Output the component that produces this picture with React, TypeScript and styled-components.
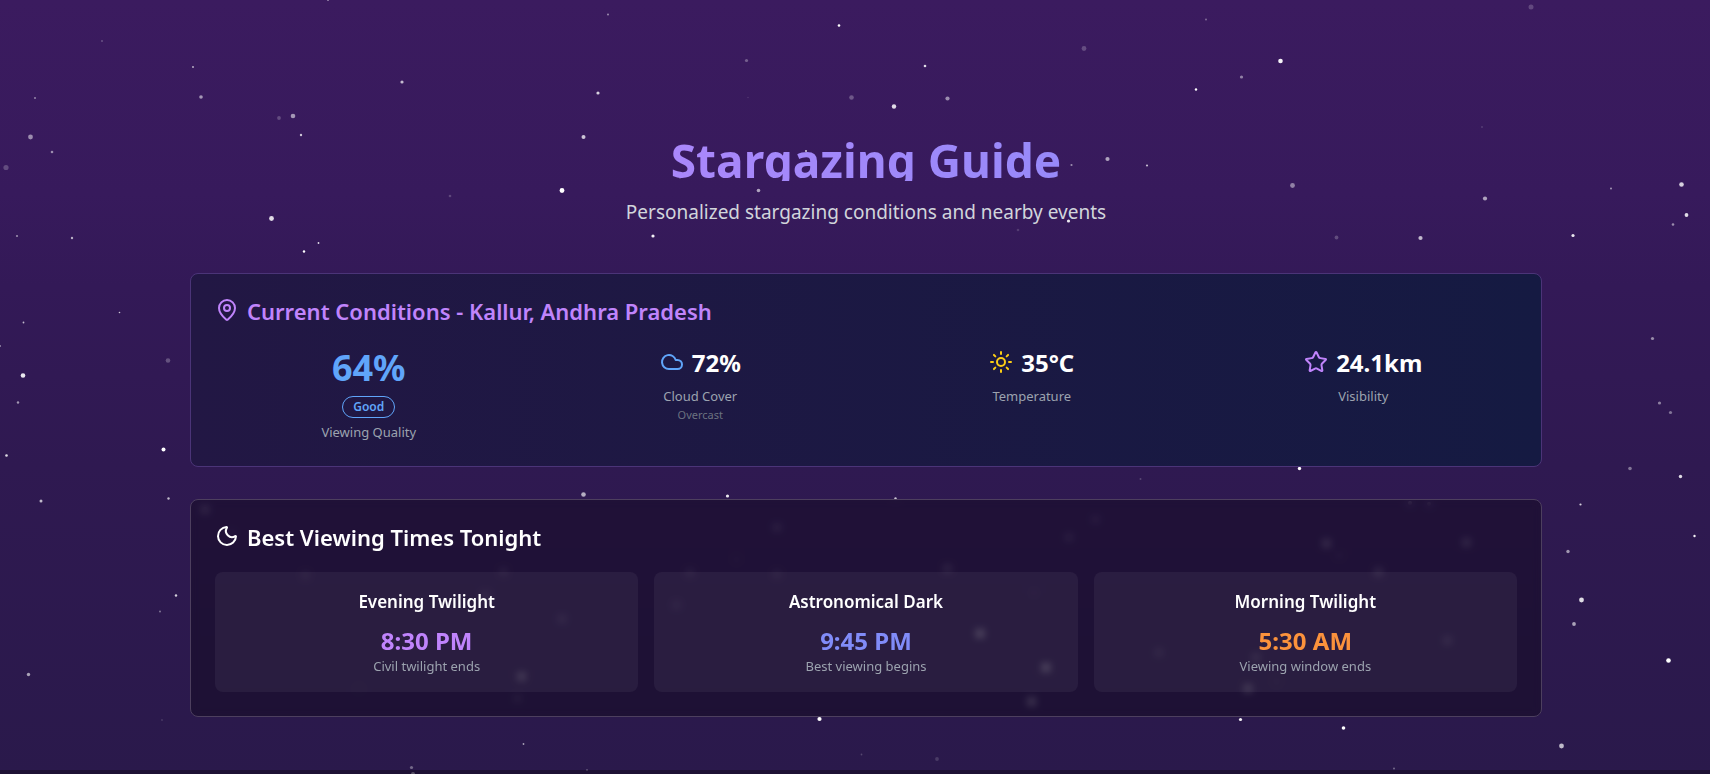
import React from "react";
import styled, { createGlobalStyle } from "styled-components";
import { Cloud, MapPin, Moon, Star, Sun } from "lucide-react";

const GlobalStyle = createGlobalStyle`
  *, *::before, *::after { box-sizing: border-box; }
  body {
    margin: 0;
    background: #2a194b;
    color: #ffffff;
    font-family: "Segoe UI", "Noto Sans", "Open Sans", sans-serif;
  }
  h1, h2, h3, p { margin: 0; }
`;

const Page = styled.div`
  position: relative;
  display: flex;
  flex-direction: column;
  min-height: 100vh;
  overflow: hidden;
  background: linear-gradient(180deg, #3b1b5f 0%, #371a5c 25%, #331957 37%, #2f1951 60%, #2a194b 100%);
`;

const Sky = styled.svg`
  position: absolute;
  inset: 0;
  width: 100%;
  height: 100%;
  fill: #ffffff;
`;

const Main = styled.main`
  position: relative;
  flex: 1;
  padding: 133px 24px 53px 46px;
`;

const Container = styled.div`
  display: flex;
  flex-direction: column;
  gap: 32px;
  max-width: 1352px;
  margin: 0 auto;
`;

const Header = styled.header`
  display: flex;
  flex-direction: column;
  gap: 16px;
  margin-bottom: 16px;
  text-align: center;
`;

const Title = styled.h1`
  height: 48px;
  font-size: 46px;
  line-height: 54px;
  font-weight: 700;
  color: transparent;
  background: linear-gradient(90deg, #c084fc, #818cf8);
  background-clip: text;
  -webkit-background-clip: text;
`;

const Subtitle = styled.p`
  padding-top: 2px;
  font-size: 19px;
  line-height: 26px;
  color: #d1d5db;
`;

const Card = styled.section<{ $variant: "conditions" | "times" }>`
  display: flex;
  flex-direction: column;
  gap: 24px;
  padding: 24px;
  border: 1px solid ${(p) => (p.$variant === "conditions" ? "#4b3478" : "#4d3f5e")};
  border-radius: 8px;
  background: ${(p) =>
    p.$variant === "conditions"
      ? "linear-gradient(90deg, #221744, #151a42)"
      : "rgba(0, 0, 0, 0.3)"};
  backdrop-filter: ${(p) => (p.$variant === "times" ? "blur(4px)" : "none")};
`;

const CardHeader = styled.div<{ $color: string }>`
  display: flex;
  align-items: center;
  gap: 8px;
  color: ${(p) => p.$color};
`;

const CardTitle = styled.h2`
  padding-top: 2px;
  font-size: 22px;
  line-height: 22px;
  font-weight: 600;
`;

const Metrics = styled.div`
  display: grid;
  grid-template-columns: repeat(auto-fit, minmax(240px, 1fr));
  gap: 24px;
`;

const Metric = styled.div`
  display: flex;
  flex-direction: column;
  align-items: center;
`;

const Score = styled.div`
  padding-top: 4px;
  font-size: 36px;
  line-height: 36px;
  font-weight: 700;
  color: #60a5fa;
`;

const Badge = styled.span`
  margin: 10px 0 4px;
  padding: 2px 10px;
  border: 1px solid #60a5fa;
  border-radius: 11px;
  font-size: 12px;
  line-height: 16px;
  font-weight: 600;
  color: #60a5fa;
`;

const MetricRow = styled.div`
  display: flex;
  align-items: center;
  gap: 8px;
  margin-bottom: 8px;
`;

const Value = styled.div<{ $color?: string }>`
  padding-top: 2px;
  font-size: 24px;
  line-height: 30px;
  font-weight: 700;
  color: ${(p) => p.$color ?? "#ffffff"};
`;

const Label = styled.div`
  font-size: 13px;
  line-height: 20px;
  color: #9ca3af;
`;

const Detail = styled.div`
  font-size: 11px;
  line-height: 18px;
  color: #6b7280;
`;

const Times = styled.div`
  display: grid;
  grid-template-columns: repeat(auto-fit, minmax(280px, 1fr));
  gap: 16px;
`;

const Tile = styled.div`
  padding: 16px;
  border-radius: 8px;
  background: rgba(255, 255, 255, 0.05);
  text-align: center;
`;

const TileTitle = styled.h3`
  margin-bottom: 8px;
  font-size: 17px;
  line-height: 28px;
  font-weight: 600;
`;

const Footer = styled.footer`
  position: relative;
  height: 4px;
  background: rgba(0, 0, 0, 0.3);
`;

/* x, y, radius, opacity */
const stars: [number, number, number, number][] = [
  [328, 0, 1, 0.5], [102, 41, 0.8, 0.4], [193, 67, 0.9, 0.7], [201, 97, 1.8, 0.55],
  [35, 98, 0.8, 0.8], [402, 82, 1.6, 0.7], [279, 118, 1.9, 0.22], [293, 116, 2.3, 0.55],
  [301, 135, 1.2, 0.75], [30.5, 137, 2.4, 0.5], [52, 152, 1.3, 0.5], [6, 167.5, 2.6, 0.22],
  [562, 190.5, 2.4, 1], [450, 196, 1.3, 0.2], [271.5, 218.5, 2.4, 0.85], [17, 236, 1.1, 0.5],
  [72, 238, 1.2, 0.65], [304, 251.5, 1.2, 1], [318.5, 243, 0.9, 0.85],
  [608, 14.5, 0.9, 0.55], [839, 25.5, 1.3, 1], [746.5, 60.5, 1.6, 0.3], [925, 66, 1.3, 0.85],
  [1084, 48.5, 2.4, 0.22], [598, 93, 1.6, 0.8], [748, 97.5, 0.7, 0.15], [851.5, 97.5, 2.3, 0.27],
  [894, 106.5, 2.2, 0.85], [947.5, 98.5, 2.1, 0.5], [583.5, 137, 2, 0.75], [1107.5, 159, 2.1, 0.6],
  [1071.5, 165, 1.1, 0.5], [806, 151, 1, 0.8], [680, 177.5, 1.2, 0.25], [758.5, 190.5, 1.8, 0.6],
  [1068.5, 221, 1.6, 0.9], [1018, 230, 1.3, 0.15], [653, 236, 1.6, 0.95],
  [1206, 19.5, 1, 0.35], [1531, 7, 2.5, 0.2], [1280.5, 61, 2.3, 0.95], [1241.5, 77, 1.6, 0.45],
  [1196, 89.5, 1.2, 1], [1482, 127, 1, 0.15], [1147, 165.5, 1.1, 0.7], [1292.5, 185.5, 2.4, 0.45],
  [1485, 198.5, 2.1, 0.6], [1611, 188.5, 0.9, 0.6], [1681.5, 184.5, 2.3, 0.8], [1686.5, 215, 1.9, 0.85],
  [1673, 224.5, 1.3, 0.5], [1573, 235.5, 1.6, 0.9], [1336.5, 237.5, 1.9, 0.22], [1420.5, 238, 2.1, 0.7],
  [23.5, 322.5, 0.9, 0.7], [119.5, 312.5, 0.8, 0.75], [0, 346, 1, 0.5], [168, 360.5, 2.3, 0.25],
  [23, 375.5, 2.3, 0.9], [18, 402.5, 1.2, 0.55], [163.5, 449.5, 2, 1], [6.5, 455.5, 1.3, 0.85],
  [41, 501, 1.5, 0.7], [168.5, 498.5, 1.2, 0.7], [176, 595.5, 1.2, 0.8], [160, 611.5, 1, 0.4],
  [28.5, 674.5, 1.7, 0.6], [162, 720, 0.9, 0.15], [523.5, 744, 0.9, 0.6], [411.5, 767.5, 1.6, 0.35],
  [413, 774, 2, 0.4], [587, 770, 1, 0.25], [583.5, 494.5, 2.3, 0.65],
  [1652.5, 338.5, 1.6, 0.5], [1659.5, 403, 1.6, 0.45], [1670.5, 412.5, 1.6, 0.4], [1630, 468.5, 1.8, 0.4],
  [1680.5, 476.5, 1.7, 0.85], [1580.5, 504.5, 1.1, 0.8], [1694.5, 536, 1.2, 0.95], [1568, 551.5, 1.7, 0.55],
  [1581.5, 600, 2.4, 0.85], [1574, 624, 1.9, 0.6], [1668.5, 660.5, 2.3, 1], [1343.5, 728, 1.8, 1],
  [1561.5, 746, 2.4, 0.7], [1394, 768.5, 1, 0.35], [1240.5, 719.5, 1.6, 0.95], [1299.5, 468.5, 1.7, 1],
  [727.5, 496, 1.6, 0.9], [895.5, 498.5, 1.2, 0.75], [819.5, 719, 2.1, 1], [1140.5, 479, 1, 0.2],
  [861.5, 754.5, 0.9, 0.2], [937, 759, 1.9, 0.15],
  [205, 509.5, 2.4, 0.5], [232, 533, 1.5, 0.3], [305.5, 575, 2, 0.35], [503.5, 571.5, 2, 0.4],
  [485.5, 595.5, 2, 0.5], [562, 619, 2, 0.45], [521.5, 676.5, 2.4, 0.8], [517.5, 698.5, 2, 0.35],
  [359, 689, 1.5, 0.2], [777, 527.5, 2.2, 0.4], [736.5, 559.5, 1.3, 0.3], [690, 572.5, 2, 0.4],
  [777, 574, 2, 0.35], [676.5, 605, 2, 0.35], [947.5, 568.5, 2.2, 0.5], [1069, 537.5, 2.2, 0.35],
  [1095.5, 519.5, 2, 0.35], [1034, 593, 1.3, 0.2], [980, 633.5, 2.5, 1], [1046, 667.5, 2.5, 1],
  [1031.5, 701.5, 2.5, 0.8], [1410, 503, 2, 0.3], [1429, 504, 2, 0.25], [1326.5, 543.5, 2.4, 0.65],
  [1339, 555.5, 1.5, 0.3], [1466.5, 542.5, 2.4, 0.55], [1378.5, 572, 2.4, 0.5], [1159, 652.5, 2.2, 0.35],
  [1256, 657.5, 2.3, 0.5], [1248, 688.5, 2.4, 0.8], [1447.5, 640.5, 2.2, 0.45], [1276.5, 681.5, 1.5, 0.25],
];

const metrics = [
  { icon: <Cloud size={24} color="#60a5fa" />, value: "72%", label: "Cloud Cover", detail: "Overcast" },
  { icon: <Sun size={24} color="#facc15" />, value: "35°C", label: "Temperature" },
  { icon: <Star size={24} color="#c084fc" />, value: "24.1km", label: "Visibility" },
];

const times = [
  { title: "Evening Twilight", time: "8:30 PM", note: "Civil twilight ends", color: "#c084fc" },
  { title: "Astronomical Dark", time: "9:45 PM", note: "Best viewing begins", color: "#818cf8" },
  { title: "Morning Twilight", time: "5:30 AM", note: "Viewing window ends", color: "#fb923c" },
];

export default function App() {
  return (
    <Page>
      <GlobalStyle />
      <Sky viewBox="0 0 1710 774" preserveAspectRatio="xMidYMid slice" aria-hidden="true">
        {stars.map(([x, y, r, o]) => (
          <circle key={`${x}-${y}`} cx={x} cy={y} r={r} opacity={o} />
        ))}
      </Sky>
      <Main>
        <Container>
          <Header>
            <Title>Stargazing Guide</Title>
            <Subtitle>Personalized stargazing conditions and nearby events</Subtitle>
          </Header>

          <Card $variant="conditions">
            <CardHeader $color="#c084fc">
              <MapPin size={24} />
              <CardTitle>Current Conditions - Kallur, Andhra Pradesh</CardTitle>
            </CardHeader>
            <Metrics>
              <Metric>
                <Score>64%</Score>
                <Badge>Good</Badge>
                <Label>Viewing Quality</Label>
              </Metric>
              {metrics.map((m) => (
                <Metric key={m.label}>
                  <MetricRow>
                    {m.icon}
                    <Value>{m.value}</Value>
                  </MetricRow>
                  <Label>{m.label}</Label>
                  {m.detail && <Detail>{m.detail}</Detail>}
                </Metric>
              ))}
            </Metrics>
          </Card>

          <Card $variant="times">
            <CardHeader $color="#ffffff">
              <Moon size={24} />
              <CardTitle>Best Viewing Times Tonight</CardTitle>
            </CardHeader>
            <Times>
              {times.map((t) => (
                <Tile key={t.title}>
                  <TileTitle>{t.title}</TileTitle>
                  <Value $color={t.color}>{t.time}</Value>
                  <Label>{t.note}</Label>
                </Tile>
              ))}
            </Times>
          </Card>
        </Container>
      </Main>
      <Footer />
    </Page>
  );
}
